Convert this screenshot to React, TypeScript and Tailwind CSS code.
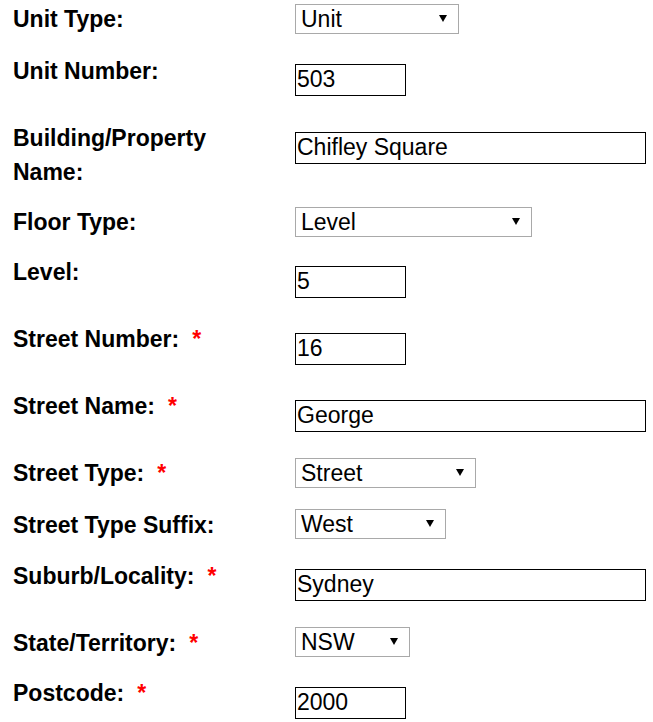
const rows = [
  { label: "Unit Type:", row: "h-[54px]", lab: "pt-[2px]", ctl: "pt-[4px]", kind: "select", w: "w-[164px]", value: "Unit" },
  { label: "Unit Number:", row: "h-[69px]", lab: "", ctl: "pt-[10px]", kind: "input", w: "w-[111px]", value: "503" },
  { label: "Building/Property Name:", row: "h-[83px]", lab: "-mt-[2px]", ctl: "pt-[9px]", kind: "input", w: "w-[351px]", value: "Chifley Square" },
  { label: "Floor Type:", row: "h-[49px]", lab: "-mt-[1px]", ctl: "pt-[1px]", kind: "select", w: "w-[237px]", value: "Level" },
  { label: "Level:", row: "h-[67px]", lab: "", ctl: "pt-[11px]", kind: "input", w: "w-[111px]", value: "5" },
  { label: "Street Number:", req: true, row: "h-[67px]", lab: "", ctl: "pt-[11px]", kind: "input", w: "w-[111px]", value: "16" },
  { label: "Street Name:", req: true, row: "h-[67px]", lab: "", ctl: "pt-[11px]", kind: "input", w: "w-[351px]", value: "George" },
  { label: "Street Type:", req: true, row: "h-[52px]", lab: "", ctl: "pt-[2px]", kind: "select", w: "w-[181px]", value: "Street" },
  { label: "Street Type Suffix:", row: "h-[51px]", lab: "", ctl: "pt-[1px]", kind: "select", w: "w-[151px]", value: "West" },
  { label: "Suburb/Locality:", req: true, row: "h-[67px]", lab: "", ctl: "pt-[10px]", kind: "input", w: "w-[351px]", value: "Sydney" },
  { label: "State/Territory:", req: true, row: "h-[50px]", lab: "", ctl: "pt-[1px]", kind: "select", w: "w-[115px]", value: "NSW" },
  { label: "Postcode:", req: true, row: "h-[46px]", lab: "", ctl: "pt-[11px]", kind: "input", w: "w-[111px]", value: "2000" },
];

function Select({ w, value }: { w: string; value: string }) {
  return (
    <div className={`relative h-[30px] ${w}`}>
      <select
        defaultValue={value}
        className="appearance-none h-full w-full border border-[#a9a9a9] bg-white pl-[5px] pb-[1px] text-[23px] leading-[26px] text-black outline-none"
      >
        <option>{value}</option>
      </select>
      <svg className="pointer-events-none absolute right-[12px] top-[11px]" width="8" height="7" viewBox="0 0 8 7">
        <path d="M0 0 H8 L4 7 Z" fill="#000" />
      </svg>
    </div>
  );
}

function Input({ w, value }: { w: string; value: string }) {
  return (
    <input
      type="text"
      defaultValue={value}
      className={`h-[32px] ${w} border border-black bg-white px-[1px] pb-[2px] text-[23px] text-black outline-none`}
    />
  );
}

export default function App() {
  return (
    <div className="w-[653px] h-[722px] overflow-hidden bg-white font-['Liberation_Sans',Arial,sans-serif]">
      {rows.map((r) => (
        <div key={r.label} className={`flex items-start ${r.row}`}>
          <div className={`w-[295px] shrink-0 pl-[13px] ${r.lab}`}>
            <div className="max-w-[250px] text-[23px] leading-[34px] font-bold text-black">
              {r.label}
              {r.req && <span className="ml-[13px] text-[#ff0000]">*</span>}
            </div>
          </div>
          <div className={r.ctl}>
            {r.kind === "select" ? <Select w={r.w} value={r.value} /> : <Input w={r.w} value={r.value} />}
          </div>
        </div>
      ))}
    </div>
  );
}
